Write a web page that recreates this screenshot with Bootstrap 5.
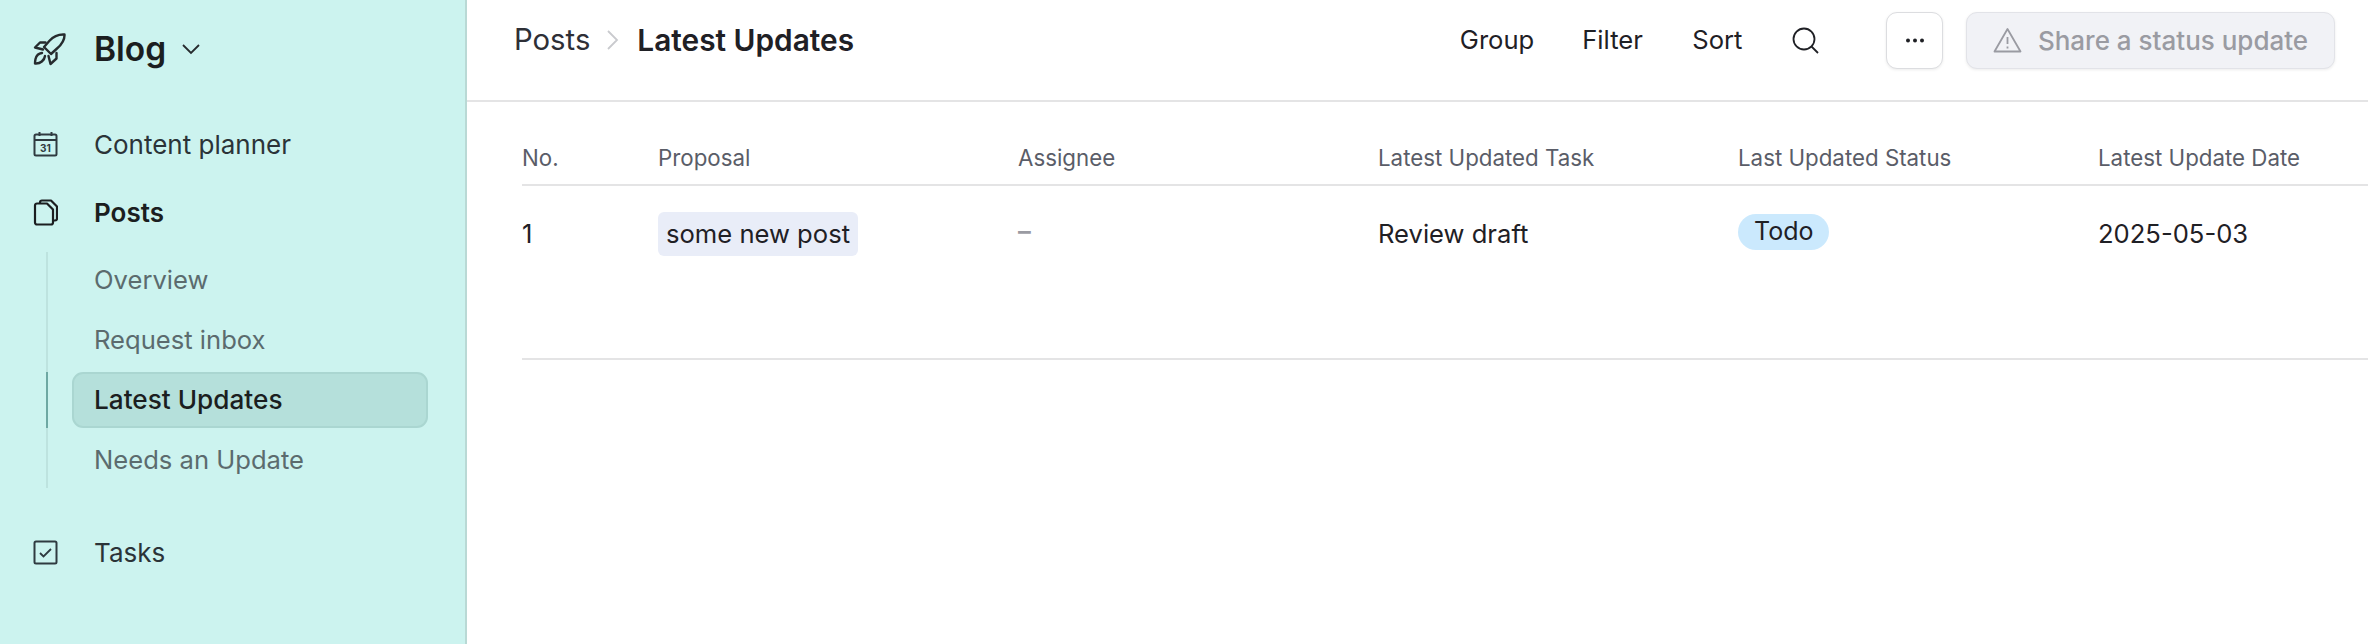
<!DOCTYPE html>
<html lang="en">
<head>
  <meta charset="UTF-8" />
  <title>Latest Updates</title>
  <link rel="stylesheet" href="https://cdn.jsdelivr.net/npm/bootstrap@5.3.0/dist/css/bootstrap.min.css" />
  <style>
  html, body { height: 100%; }
  body {
    font-family: Inter, "Liberation Sans", sans-serif;
    color: #1f2025;
    background: #fff;
    overflow: hidden;
  }
  .side-bar {
    width: 467px;
    height: 644px;
    background: #ccf3ef;
    border-right: 2px solid #b9d9d5;
    padding: 0 0 0 33px;
  }
  .blog-head { height: 98px; margin-bottom: 12px; }
  .blog-name { font-size: 33.500px; font-weight: 600; color: #1b1e20; margin-left: 28px; }
  .side-link { height: 68px; font-size: 26px; color: #2b3338; }
  .side-link svg { flex: none; }
  .side-link span { margin-left: 36px; }
  .side-link.is-open { color: #1b1e20; font-weight: 600; }
  .sub-list {
    margin-left: 13px;
    border-left: 2px solid #bde3df;
    width: 382px;
    margin-top: 6px;
  }
  .sub-link {
    height: 56px;
    margin-left: 24px;
    padding-left: 20px;
    font-size: 25.600px;
    color: #5b6b6e;
    border: 2px solid transparent;
    border-radius: 11px;
    position: relative;
  }
  .sub-link + .sub-link { margin-top: 4px; }
  .sub-link.is-active {
    background: #b5e0db;
    border-color: #aad6d1;
    color: #1b1e20;
    font-size: 26.200px;
    font-weight: 500;
  }
  .sub-link.is-active::before {
    content: "";
    position: absolute;
    left: -28px;
    top: -2px;
    bottom: -2px;
    width: 2px;
    background: #6ea8a3;
  }
  .tasks-link { margin-top: 30px; }
  .top-bar {
    height: 102px;
    border-bottom: 2px solid #e4e4e5;
    padding: 0 33px 20px 47px;
  }
  .crumb-a { font-size: 29.300px; color: #2e2f36; }
  .crumb-b { font-size: 29.800px; font-weight: 600; color: #1f2025; }
  .crumb-sep { margin: 0 18px 0 17px; }
  .tool-link { font-size: 25.600px; color: #1f2025; margin-right: 48px; }
  .tool-link.tool-wide { margin-right: 49.500px; }
  .find-icon { margin-right: 67px; }
  .more-btn {
    width: 57px;
    height: 57px;
    background: #fff;
    border: 1px solid #dcdde0;
    border-radius: 11px;
    box-shadow: 0 1px 3px rgba(0,0,0,.08);
  }
  .share-btn {
    height: 57px;
    width: 369px;
    margin-left: 23px;
    background: #f1f2f6;
    border: 1px solid #e2e3e8;
    border-radius: 11px;
    color: #9a9ba2;
    font-size: 26px;
    font-weight: 500;
    box-shadow: 0 1px 3px rgba(0,0,0,.08);
  }
  .table-wrap { padding-left: 55px; overflow: hidden; }
  .updates-table { width: 1936px; table-layout: fixed; margin: 0; }
  .updates-table th {
    font-size: 22.300px;
    font-weight: 400;
    color: #5a5d68;
    height: 83px;
    padding: 30px 0 0;
    vertical-align: middle;
    border-bottom: 2px solid #e4e4e5;
    box-shadow: none;
  }
  .updates-table td {
    font-size: 25.600px;
    color: #1f2025;
    height: 174px;
    padding: 26px 0 0;
    vertical-align: top;
    border-bottom: 2px solid #e4e4e5;
    box-shadow: none;
  }
  .cell-line { height: 44px; display: flex; align-items: center; }
  .post-chip {
    background: #e9edf8;
    border-radius: 6px;
    padding: 0 8px;
    height: 44px;
    display: inline-flex;
    align-items: center;
  }
  .empty-dash { color: #9a9ba2; margin-top: -3px; font-weight: 600; }
  .todo-chip {
    background: #cbe9fd;
    border-radius: 18px;
    height: 36px;
    padding: 0 16px;
    display: inline-flex;
    align-items: center;
    font-size: 25px;
    margin-top: -5px;
  }
  </style>
</head>
<body>
  <div class="d-flex">
    <aside class="side-bar flex-shrink-0">
      <div class="blog-head d-flex align-items-center">
        <svg width="33" height="33" viewBox="0 0 33 33" fill="none" stroke="#262b2e" stroke-width="2.400" stroke-linejoin="round" stroke-linecap="round">
          <path d="M31.500 1.500c-6-.4-11 1.800-15 6.200L11 14l7 7 6-5.500c4.600-4 7.800-8.600 7.500-14z"/>
          <path d="M12.500 9.500H7L2 14.500l8 2"/>
          <path d="M23.500 20v5.500L17.500 31l-2-8"/>
          <path d="M9 20c-3 .4-5.500 2-6.500 6-.3 1.500-.5 3.500-.5 4.500 2.500.2 5-.4 6.800-2 1.700-1.500 3-3.700 3.200-5.500"/>
        </svg>
        <span class="blog-name">Blog</span>
        <svg class="ms-3" width="18" height="11" viewBox="0 0 18 11" fill="none" stroke="#262b2e" stroke-width="1.800"><path d="M1 1l8 8 8-8"/></svg>
      </div>
      <div class="side-link d-flex align-items-center">
        <svg width="25" height="26" viewBox="0 0 25 26" fill="none" stroke="#2f3a40" stroke-width="2">
          <rect x="1.500" y="3.500" width="22" height="21" rx="1.500"/>
          <path d="M1.500 9h22M6.500 1v4M18.500 1v4"/>
          <text x="12.500" y="21" font-size="10" font-weight="700" text-anchor="middle" fill="#2f3a40" stroke="none">31</text>
        </svg>
        <span>Content planner</span>
      </div>
      <div class="side-link is-open d-flex align-items-center">
        <svg width="25" height="27" viewBox="0 0 25 27" fill="none" stroke="#1b1e20" stroke-width="2.200" stroke-linejoin="round">
          <path d="M2 6.500a2 2 0 0 1 2-2h10l6 6v13a2 2 0 0 1-2 2H4a2 2 0 0 1-2-2z"/>
          <path d="M7 4.500v-1a2 2 0 0 1 2-2h9l6 6v12a2 2 0 0 1-2 2h-2"/>
        </svg>
        <span>Posts</span>
      </div>
      <div class="sub-list">
        <div class="sub-link d-flex align-items-center">Overview</div>
        <div class="sub-link d-flex align-items-center">Request inbox</div>
        <div class="sub-link is-active d-flex align-items-center">Latest Updates</div>
        <div class="sub-link d-flex align-items-center">Needs an Update</div>
      </div>
      <div class="side-link tasks-link d-flex align-items-center">
        <svg width="25" height="25" viewBox="0 0 25 25" fill="none" stroke="#2f3a40" stroke-width="2">
          <rect x="1.500" y="1.500" width="22" height="22" rx="1.500"/>
          <path d="M7 13l3.500 3.500L18 9" stroke-width="1.800"/>
        </svg>
        <span>Tasks</span>
      </div>
    </aside>

    <main class="flex-grow-1 overflow-hidden">
      <div class="top-bar d-flex align-items-center justify-content-between">
        <div class="d-flex align-items-center">
          <span class="crumb-a">Posts</span>
          <svg class="crumb-sep" width="12" height="20" viewBox="0 0 12 20" fill="none" stroke="#c9cace" stroke-width="1.800"><path d="M1 1l9 9-9 9"/></svg>
          <span class="crumb-b">Latest Updates</span>
        </div>
        <div class="d-flex align-items-center">
          <span class="tool-link">Group</span>
          <span class="tool-link tool-wide">Filter</span>
          <span class="tool-link tool-wide">Sort</span>
          <svg class="find-icon" width="27" height="27" viewBox="0 0 27 27" fill="none" stroke="#1f2025" stroke-width="1.800"><circle cx="12" cy="12" r="10.500"/><path d="M19.500 19.500L26 26"/></svg>
          <button class="more-btn d-flex align-items-center justify-content-center p-0" type="button" aria-label="More">
            <svg width="20" height="5" viewBox="0 0 20 5" fill="#1f2025"><circle cx="3" cy="2.500" r="2"/><circle cx="10" cy="2.500" r="2"/><circle cx="17" cy="2.500" r="2"/></svg>
          </button>
          <button class="share-btn d-flex align-items-center justify-content-center gap-3 p-0" type="button" disabled>
            <svg width="29" height="26" viewBox="0 0 29 26" fill="none" stroke="#9a9ba2" stroke-width="1.800" stroke-linejoin="round"><path d="M14.500 2L27.500 24.500h-26z"/><path d="M14.500 10v7M14.500 19.500v2"/></svg>
            Share a status update
          </button>
        </div>
      </div>
      <div class="table-wrap">
        <table class="table updates-table">
          <colgroup><col style="width:136px"><col style="width:360px"><col style="width:360px"><col style="width:360px"><col style="width:360px"><col style="width:360px"></colgroup>
          <thead>
            <tr><th>No.</th><th>Proposal</th><th>Assignee</th><th>Latest Updated Task</th><th>Last Updated Status</th><th>Latest Update Date</th></tr>
          </thead>
          <tbody>
            <tr>
              <td><div class="cell-line">1</div></td>
              <td><span class="post-chip">some new post</span></td>
              <td><div class="cell-line empty-dash">–</div></td>
              <td><div class="cell-line">Review draft</div></td>
              <td><span class="todo-chip">Todo</span></td>
              <td><div class="cell-line">2025-05-03</div></td>
            </tr>
          </tbody>
        </table>
      </div>
    </main>
  </div>
</body>
</html>
